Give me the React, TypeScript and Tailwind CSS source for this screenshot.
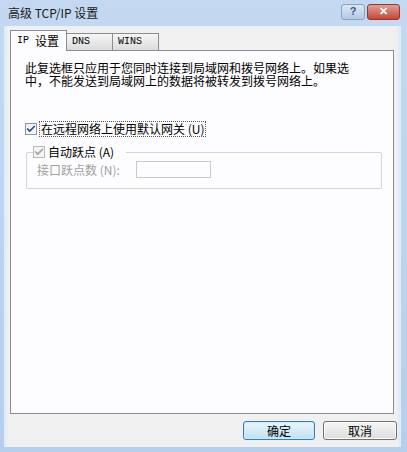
import { Check } from "lucide-react";

const cjk = "font-['SimSun','Noto_Sans_CJK_SC',sans-serif]";

function CheckBox({ disabled }: { disabled?: boolean }) {
  return (
    <span
      className={`flex h-[12px] w-[12px] shrink-0 items-center justify-center border ${
        disabled ? "border-[#b8b8b8] bg-[#f4f4f4]" : "border-[#8a96a8] bg-gradient-to-br from-[#e8ecf2] to-white"
      }`}
    >
      <Check
        className={`h-[10px] w-[10px] ${disabled ? "text-[#a0a0a0]" : "text-[#2b4f8a]"}`}
        strokeWidth={4}
      />
    </span>
  );
}

export default function App() {
  return (
    <div className={`flex h-[452px] w-[407px] flex-col bg-gradient-to-b from-[#c4d9f1] to-[#b6cfec] ${cjk}`}>
      {/* Title bar */}
      <div className="flex h-[26px] shrink-0 items-center justify-between pl-[8px] pr-[7px]">
        <span className="text-[12px] leading-none text-[#1a1a1a] font-['Noto_Sans_CJK_SC',sans-serif]">
          高级 TCP/IP 设置
        </span>
        <div className="flex items-center gap-[2px] pb-[3px]">
          <div className="flex h-[16px] w-[24px] items-center justify-center rounded-[3px] border border-[#8aa2c3] bg-gradient-to-b from-[#dbe7f6] to-[#b4c9e6] text-[11px] font-bold leading-none text-[#3f5a80] font-['Liberation_Sans',sans-serif]">
            ?
          </div>
          <div className="flex h-[16px] w-[33px] items-center justify-center rounded-[3px] border border-[#8d3a30] bg-gradient-to-b from-[#e59c8f] to-[#c1473a] text-[11px] font-bold leading-none text-white font-['Liberation_Sans',sans-serif]">
            ✕
          </div>
        </div>
      </div>

      {/* Client area */}
      <div className="ml-[4px] mr-[6px] flex flex-1 flex-col border-l-[3px] border-r-[3px] border-[#e2ecf8] bg-[#f0f0f0] pb-[2px]">
        {/* Tabs */}
        <div className="mt-[4px] flex items-end pl-[3px]">
          <div className="relative z-10 -mb-px flex h-[21px] w-[57px] items-center border border-b-0 border-[#898c95] bg-[#fdfcfe] pl-[6px] text-[12px] leading-none text-black">
            <span className="font-['Liberation_Mono',monospace] text-[10px]">IP</span>
            <span className="ml-[6px]">设置</span>
          </div>
          <div className="flex h-[17px] w-[46px] items-center border border-b-0 border-l-0 border-[#898c95] bg-gradient-to-b from-[#f6f6f6] to-[#dcdcdc] pl-[5px] font-['Liberation_Mono',monospace] text-[10px] leading-none text-black">
            DNS
          </div>
          <div className="flex h-[17px] w-[46px] items-center border border-b-0 border-l-0 border-[#898c95] bg-gradient-to-b from-[#f6f6f6] to-[#dcdcdc] pl-[5px] font-['Liberation_Mono',monospace] text-[10px] leading-none text-black">
            WINS
          </div>
        </div>

        {/* Panel */}
        <div className="ml-[3px] mr-[4px] flex h-[364px] flex-col border border-[#898c95] bg-[#fdfcfe] pl-[14px] pr-[10px] pt-[10px]">
          <p className="text-[12px] leading-[13px] text-black">
            此复选框只应用于您同时连接到局域网和拨号网络上。如果选
            <br />
            中，不能发送到局域网上的数据将被转发到拨号网络上。
          </p>

          <label className="mt-[34px] flex items-center gap-[2px] text-[12px] leading-none text-black">
            <CheckBox />
            <span className="border border-dotted border-[#555] px-[1px] py-[1px]">
              在远程网络上使用默认网关 (U)
            </span>
          </label>

          {/* Group box */}
          <div className="relative ml-px mr-[1px] mt-[15px] h-[37px] rounded-[2px] border border-[#d5d5d5]">
            <div className="absolute -top-[7px] left-[6px] flex items-center gap-[3px] bg-[#fdfcfe] pr-[12px] text-[12px] leading-none text-black">
              <CheckBox disabled />
              <span>自动跃点 (A)</span>
            </div>
            <div className="ml-[10px] mt-[8px] flex items-center gap-[16px] text-[12px] leading-none text-[#a0a0a0]">
              <span>接口跃点数 (N):</span>
              <div className="h-[17px] w-[75px] border border-[#c9c9c9] bg-[#fdfcfe]" />
            </div>
          </div>
        </div>

        {/* Buttons */}
        <div className="mt-[7px] flex justify-end gap-[8px] pr-[1px] text-[12px] leading-none text-black">
          <button className="flex h-[19px] w-[72px] items-center justify-center rounded-[3px] border border-[#3d7bad] bg-gradient-to-b from-[#eaf6fd] to-[#bfe1f3] shadow-[inset_0_0_0_1px_#c9ecfc]">
            确定
          </button>
          <button className="flex h-[19px] w-[74px] items-center justify-center rounded-[3px] border border-[#707070] bg-gradient-to-b from-[#f6f6f6] to-[#dddddd] shadow-[inset_0_0_0_1px_#fcfcfc]">
            取消
          </button>
        </div>
      </div>
      <div className="h-[5px] shrink-0" />
    </div>
  );
}
